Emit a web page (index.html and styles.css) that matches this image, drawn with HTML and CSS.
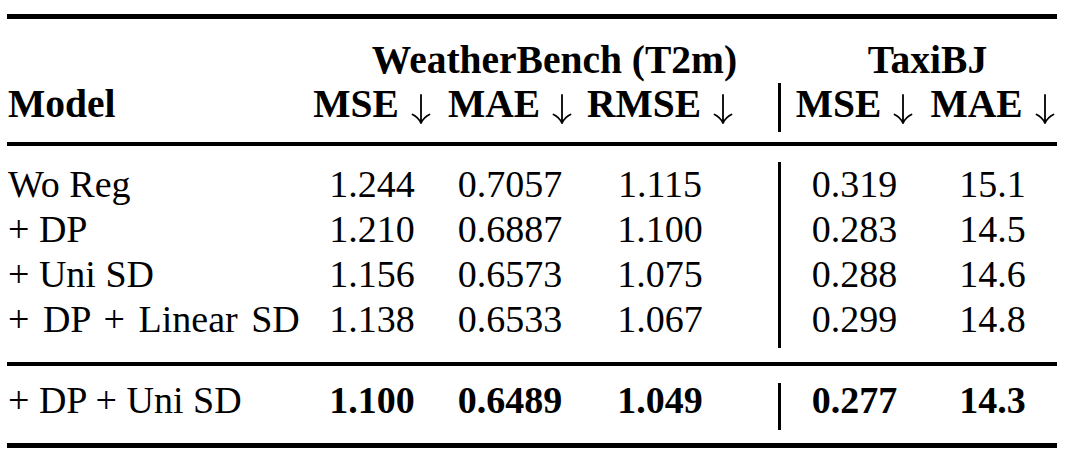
FILE: index.html
```html
<!DOCTYPE html>
<html lang="en">

<head>
  <meta charset="UTF-8">
  <link rel="stylesheet" href="styles.css">
</head>

<body>
  <div class="results">
    <div class="head">
      <div class="row groups">
        <div></div>
        <div class="wb">WeatherBench (T2m)</div>
        <div class="tx">TaxiBJ</div>
      </div>
      <div class="row metrics">
        <div class="name">Model</div>
        <div>MSE <svg class="arr" viewBox="0 0 20 30"><path d="M10 1V29M1.5 20.5Q7 23 10 29Q13 23 18.5 20.5"/></svg></div>
        <div>MAE <svg class="arr" viewBox="0 0 20 30"><path d="M10 1V29M1.5 20.5Q7 23 10 29Q13 23 18.5 20.5"/></svg></div>
        <div>RMSE <svg class="arr" viewBox="0 0 20 30"><path d="M10 1V29M1.5 20.5Q7 23 10 29Q13 23 18.5 20.5"/></svg></div>
        <div></div>
        <div class="sep">MSE <svg class="arr" viewBox="0 0 20 30"><path d="M10 1V29M1.5 20.5Q7 23 10 29Q13 23 18.5 20.5"/></svg></div>
        <div>MAE <svg class="arr" viewBox="0 0 20 30"><path d="M10 1V29M1.5 20.5Q7 23 10 29Q13 23 18.5 20.5"/></svg></div>
      </div>
    </div>

    <div class="body">
      <div class="row">
        <div class="name">Wo Reg</div>
        <div>1.244</div>
        <div>0.7057</div>
        <div>1.115</div>
        <div></div>
        <div class="sep">0.319</div>
        <div>15.1</div>
      </div>
      <div class="row">
        <div class="name">+ DP</div>
        <div>1.210</div>
        <div>0.6887</div>
        <div>1.100</div>
        <div></div>
        <div class="sep">0.283</div>
        <div>14.5</div>
      </div>
      <div class="row">
        <div class="name">+ Uni SD</div>
        <div>1.156</div>
        <div>0.6573</div>
        <div>1.075</div>
        <div></div>
        <div class="sep">0.288</div>
        <div>14.6</div>
      </div>
      <div class="row last">
        <div class="name wide">+ DP + Linear SD</div>
        <div>1.138</div>
        <div>0.6533</div>
        <div>1.067</div>
        <div></div>
        <div class="sep">0.299</div>
        <div>14.8</div>
      </div>
    </div>

    <div class="foot">
      <div class="row best">
        <div class="name">+ DP + Uni SD</div>
        <div>1.100</div>
        <div>0.6489</div>
        <div>1.049</div>
        <div></div>
        <div class="sep">0.277</div>
        <div>14.3</div>
      </div>
    </div>
  </div>
</body>
</html>
```

FILE: styles.css
```css
body{
	margin:0;
	background:#fff;
}
.results{
	width:1050px;
	margin:14px 0 0 7px;
	border-top:5px solid #000;
	border-bottom:5px solid #000;
	font-family:"Liberation Serif","Times New Roman",serif;
	font-size:38px;
	color:#000;
}
.row{
	display:grid;
	grid-template-columns:295px 140px 136px 164px 36px 150px 129px;
	line-height:45px;
	text-align:center;
}
.row .name{
	text-align:left;
	padding-left:1px;
}
.row .wide{
	word-spacing:4px;
}
.sep{
	border-left:3px solid #000;
}

/* down arrows in the header */
.arr{
	width:20px;
	height:30px;
	vertical-align:-7px;
	margin-left:2px;
}
.arr path{
	fill:none;
	stroke:#000;
	stroke-width:1.8;
	stroke-linecap:round;
}

/* header */
.head{
	padding:18px 0 10px;
	border-bottom:4px solid #000;
	font-weight:bold;
	font-size:39.5px;
}
.groups{
	line-height:46px;
}
.groups .wb{
	grid-column:2 / 6;
	padding-left:29px;
}
.groups .tx{
	grid-column:6 / 8;
	padding-left:20px;
}
.metrics{
	line-height:42px;
}
.metrics .sep{
	padding-bottom:7px;
}

/* body */
.body{
	padding:16px 0 14px;
	border-bottom:4px solid #000;
}
.body .last .sep{
	padding-bottom:6px;
}

/* best row */
.foot{
	padding:17px 0 13px;
}
.best{
	line-height:34px;
}
.best div + div{
	font-weight:bold;
}
.best .sep{
	padding-bottom:13px;
}
```
